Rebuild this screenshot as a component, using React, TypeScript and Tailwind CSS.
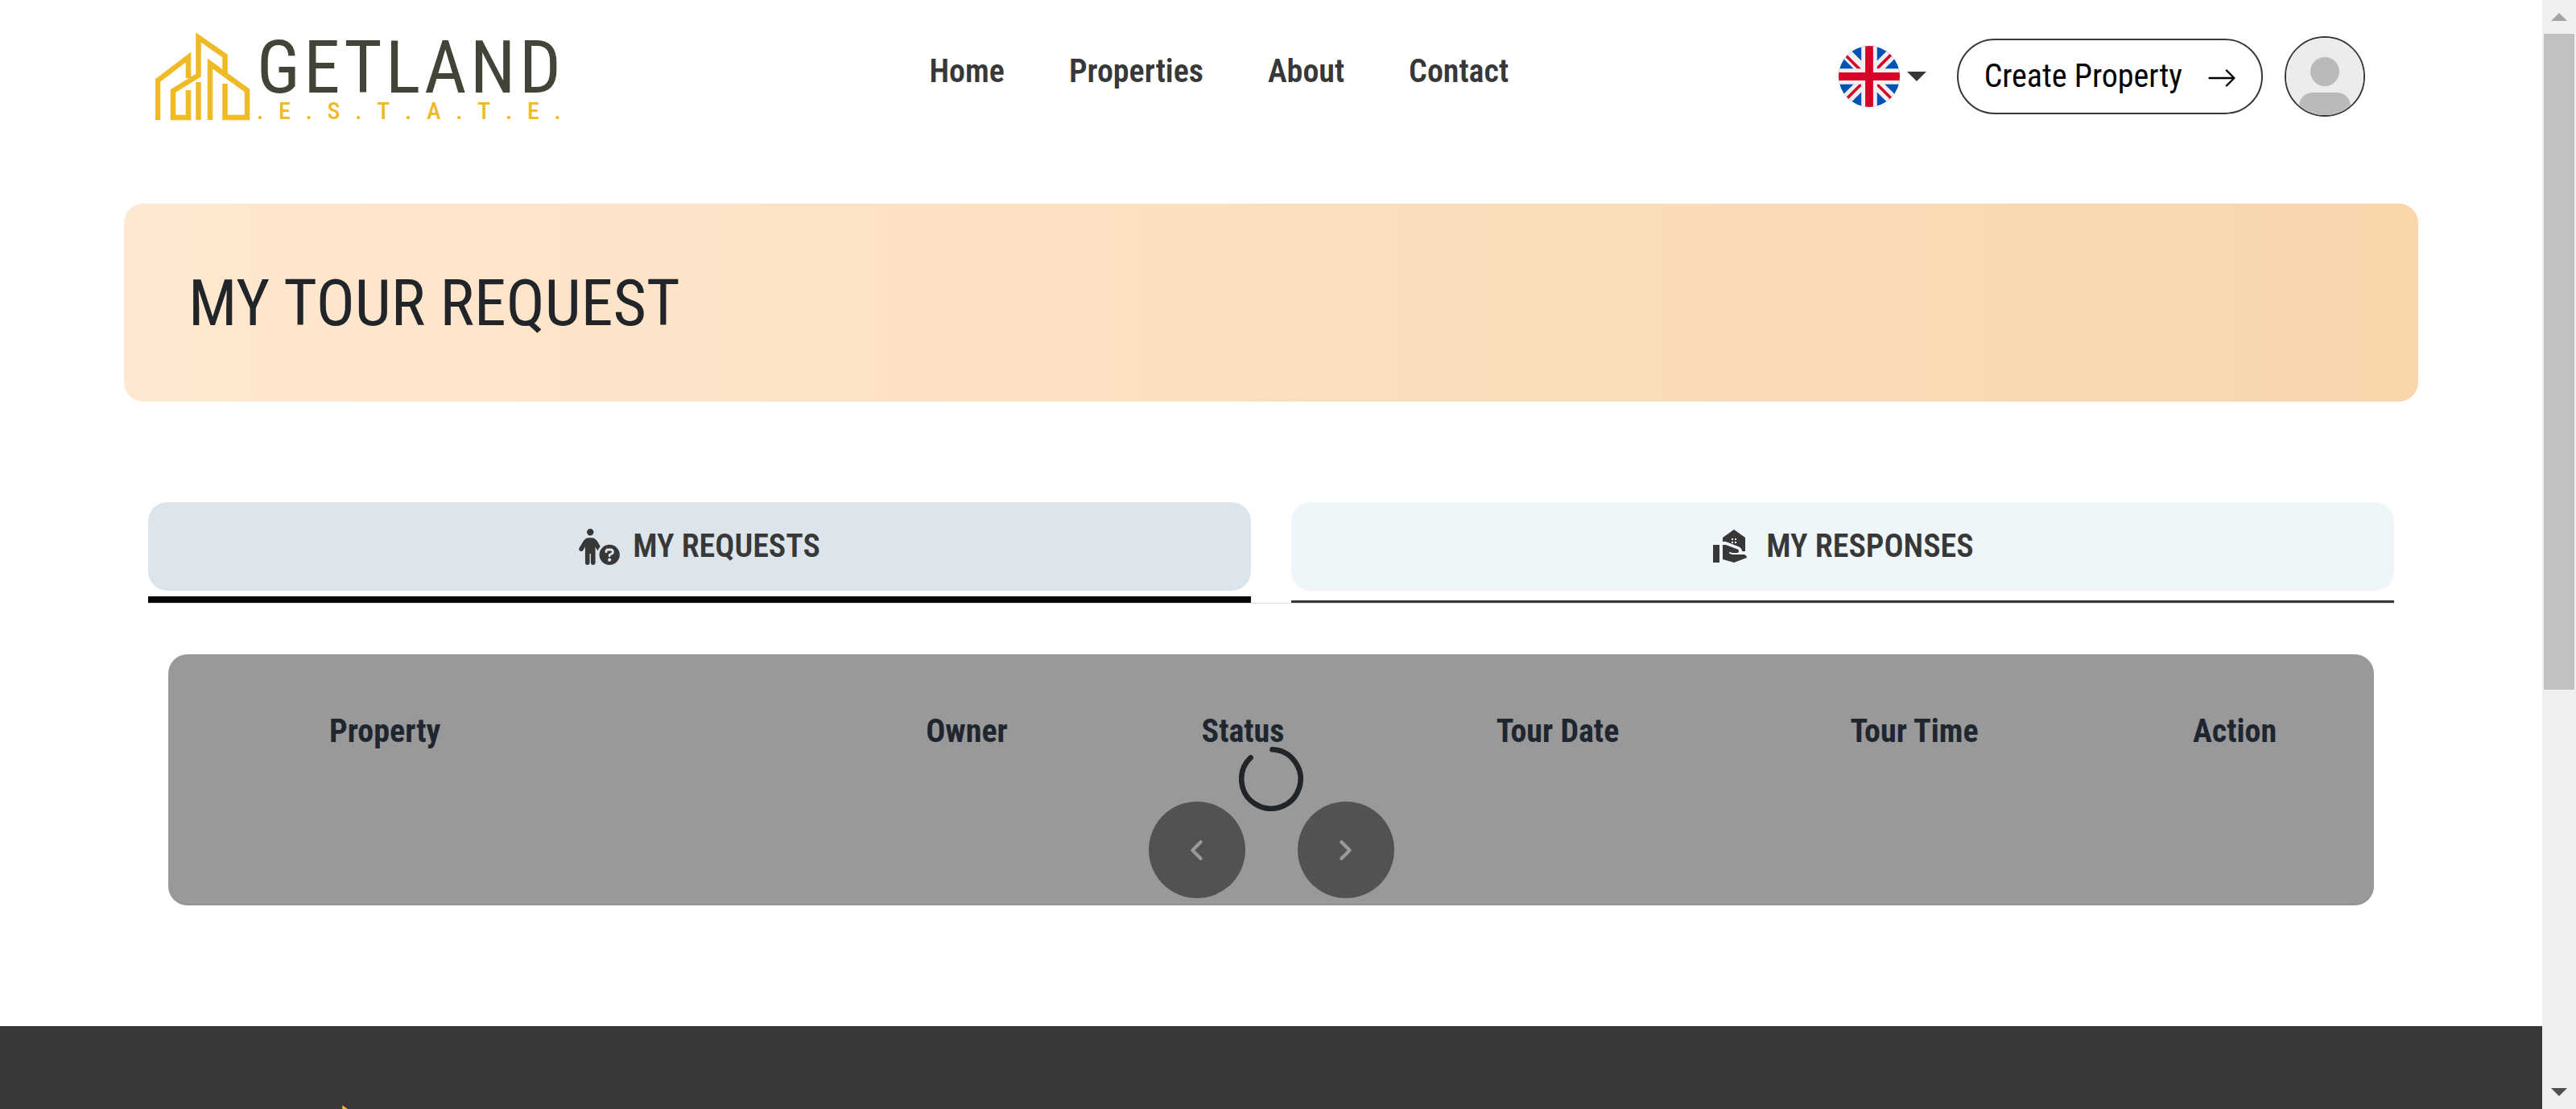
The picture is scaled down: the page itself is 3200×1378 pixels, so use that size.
import { FaPersonCircleQuestion } from "react-icons/fa6";
import { MdRealEstateAgent } from "react-icons/md";
import { BsArrowRight } from "react-icons/bs";
import { ChevronLeft, ChevronRight } from "lucide-react";

const NAV_LINKS = ["Home", "Properties", "About", "Contact"];

const COLUMNS = [
  { label: "Property", width: "w-[822px]", cell: "pl-[200px] text-left" },
  { label: "Owner", width: "w-[340px]", cell: "text-center" },
  { label: "Status", width: "w-[346px]", cell: "text-center" },
  { label: "Tour Date", width: "w-[436px]", cell: "text-center" },
  { label: "Tour Time", width: "w-[450px]", cell: "text-center" },
  { label: "Action", width: "w-[346px]", cell: "text-center" },
];

function Buildings() {
  return (
    <svg viewBox="0 0 118 110" className="h-[110px] w-[118px] shrink-0" fill="none" stroke="#f0b926" strokeWidth="6.5" aria-hidden="true">
      <path d="M3 109V60L41 31V57" strokeMiterlimit="3" />
      <path d="M86.500 51V29.500L53.500 6.500V53.500L22 73V106H41V72" strokeMiterlimit="3" />
      <path d="M53.500 62V109" />
      <path d="M68 109V39L114 72.500V106H86.500V64" strokeMiterlimit="3" />
    </svg>
  );
}

function Wordmark({ text, className }: { text: string; className: string }) {
  return (
    <span className={`flex justify-between ${className}`} aria-label={text}>
      {text.split("").map((ch, i) => (
        <span key={i}>{ch}</span>
      ))}
    </span>
  );
}

function Logo() {
  return (
    <a href="#home" className="flex h-[110px] w-[504px] items-start gap-2" aria-label="Getland Estate">
      <Buildings />
      <span className="flex min-w-0 grow flex-col pt-[12px]">
        <Wordmark text="GETLAND" className="text-[91px] leading-[65px] text-[#434437]" />
        <Wordmark text=".E.S.T.A.T.E." className="text-[30px] leading-[42px] font-medium text-[#f0b926]" />
      </span>
    </a>
  );
}

function UkFlag() {
  return (
    <svg viewBox="0 0 512 512" className="size-[76px]" aria-hidden="true">
      <defs>
        <clipPath id="flag-circle">
          <circle cx="256" cy="256" r="256" />
        </clipPath>
      </defs>
      <g clipPath="url(#flag-circle)">
        <path fill="#0052b4" d="M0 0h512v512H0z" />
        <path stroke="#f0f0f0" strokeWidth="92" d="M40 40l432 432M472 40L40 472" />
        <path stroke="#d80027" strokeWidth="24" d="M64 84l124 124M448 64L304 208M60 450l150-150M300 300l160 160" />
        <path fill="#f0f0f0" d="M190 0h132v190h190v132H322v190H190V322H0V190h190z" />
        <path fill="#d80027" d="M223 0h66v223h223v66H289v223h-66V289H0v-66h223z" />
      </g>
    </svg>
  );
}

function Avatar() {
  return (
    <svg viewBox="0 0 96 96" className="size-full" aria-hidden="true">
      <path fill="#ebecee" d="M0 0h96v96H0z" />
      <circle cx="48" cy="42" r="18" fill="#bababa" />
      <path fill="#bababa" d="M16 96V84a17 17 0 0 1 17-16h30a17 17 0 0 1 17 16v12z" />
    </svg>
  );
}

function Header() {
  return (
    <header className="flex items-center justify-between pt-[40px] pr-[220px] pl-[193px]">
      <Logo />
      <nav className="flex gap-20 pb-[12px] pl-[48px] text-[40px] leading-[60px] font-semibold text-[#383838]">
        {NAV_LINKS.map((label) => (
          <a key={label} href={`#${label.toLowerCase()}`}>
            {label}
          </a>
        ))}
      </nav>
      <div className="flex items-center">
        <button type="button" aria-label="Language" className="flex items-center gap-[9px]">
          <UkFlag />
          <svg viewBox="0 0 24 12" className="h-3 w-6" aria-hidden="true">
            <path fill="#383838" d="M0 0h24L12 12z" />
          </svg>
        </button>
        <button
          type="button"
          className="ml-[38px] flex h-[94px] items-center gap-[30px] rounded-full border-2 border-[#383838] pr-[30px] pl-8 text-[40px] text-black"
        >
          Create Property
          <BsArrowRight className="mt-1 size-[38px]" />
        </button>
        <button type="button" aria-label="Account" className="ml-[27px] size-[100px] overflow-hidden rounded-full border-2 border-[#383838]">
          <Avatar />
        </button>
      </div>
    </header>
  );
}

function Tabs() {
  return (
    <div role="tablist" className="mx-[30px] mt-[125px] flex gap-[50px] border-b border-[#dee2e6] text-[40px] leading-[60px] font-semibold text-[#383838]">
      <button type="button" role="tab" aria-selected="true" className="flex-1 border-b-8 border-[#070909] pb-[7px]">
        <span className="flex h-[110px] items-center justify-center gap-4 rounded-3xl bg-[#dde5ec]">
          <FaPersonCircleQuestion className="h-[45px] w-[51px]" />
          MY REQUESTS
        </span>
      </button>
      <button type="button" role="tab" aria-selected="false" className="flex-1 border-b-[3px] border-[#383838] pb-3">
        <span className="flex h-[110px] items-center justify-center gap-5 rounded-3xl bg-[#eef6fa]">
          <MdRealEstateAgent className="size-12" />
          MY RESPONSES
        </span>
      </button>
    </div>
  );
}

function Spinner() {
  return (
    <svg viewBox="0 0 80 80" className="size-20" fill="none" stroke="#212529" strokeWidth="6.600" strokeLinecap="round" role="status" aria-label="Loading">
      <path d="M41.500 3.300A36.700 36.700 0 1 1 14.600 13.400" />
    </svg>
  );
}

function RequestsTable() {
  return (
    <section className="relative mx-[55px] mt-[63px] rounded-3xl border-b-2 border-[#929292] bg-[#999999] pb-[7px]">
      <table className="w-full table-fixed text-[40px] leading-[60px] font-bold text-[#1f2630]">
        <colgroup>
          {COLUMNS.map((c) => (
            <col key={c.label} className={c.width} />
          ))}
        </colgroup>
        <thead>
          <tr>
            {COLUMNS.map((c) => (
              <th key={c.label} scope="col" className={`pt-[66px] pb-[57px] ${c.cell}`}>
                {c.label}
              </th>
            ))}
          </tr>
        </thead>
      </table>
      <div className="flex justify-center gap-[65px] text-[#999999]">
        <button type="button" aria-label="Previous page" className="flex size-[120px] items-center justify-center rounded-full bg-[#525252]">
          <ChevronLeft className="size-[41px]" strokeWidth={2.5} />
        </button>
        <button type="button" aria-label="Next page" className="flex size-[120px] items-center justify-center rounded-full bg-[#525252]">
          <ChevronRight className="size-[41px]" strokeWidth={2.5} />
        </button>
      </div>
      <div className="absolute inset-0 flex items-center justify-center">
        <Spinner />
      </div>
    </section>
  );
}

function Scrollbar() {
  return (
    <div className="flex w-[42px] shrink-0 flex-col bg-[#f0f0f0]" aria-hidden="true">
      <span className="flex h-[42px] items-center justify-center">
        <svg viewBox="0 0 20 10" className="h-[10px] w-5">
          <path fill="#a3a3a3" d="M0 10h20L10 0z" />
        </svg>
      </span>
      <span className="flex grow flex-col">
        <span className="mx-[2px] h-[63%] bg-[#c1c1c1]" />
      </span>
      <span className="flex h-[42px] items-center justify-center">
        <svg viewBox="0 0 20 10" className="h-[10px] w-5">
          <path fill="#505050" d="M0 0h20L10 10z" />
        </svg>
      </span>
    </div>
  );
}

export default function App() {
  return (
    <div className="flex h-screen overflow-hidden bg-white font-['Roboto_Condensed',Roboto,sans-serif]">
      <div className="flex min-w-0 grow flex-col">
        <Header />
        <main className="px-[154px] pb-[150px]">
          <div className="mt-[103px] rounded-3xl bg-[linear-gradient(90deg,#ffe8d1,#f9d6ac)] px-20 pt-16 pb-[62px]">
            <h1 className="text-[80px] leading-[120px] text-[#212529]">MY TOUR REQUEST</h1>
          </div>
          <Tabs />
          <RequestsTable />
        </main>
        <footer className="min-h-0 grow overflow-hidden bg-[#383838] pt-[98px] pl-[375px]">
          <Buildings />
        </footer>
      </div>
      <Scrollbar />
    </div>
  );
}
